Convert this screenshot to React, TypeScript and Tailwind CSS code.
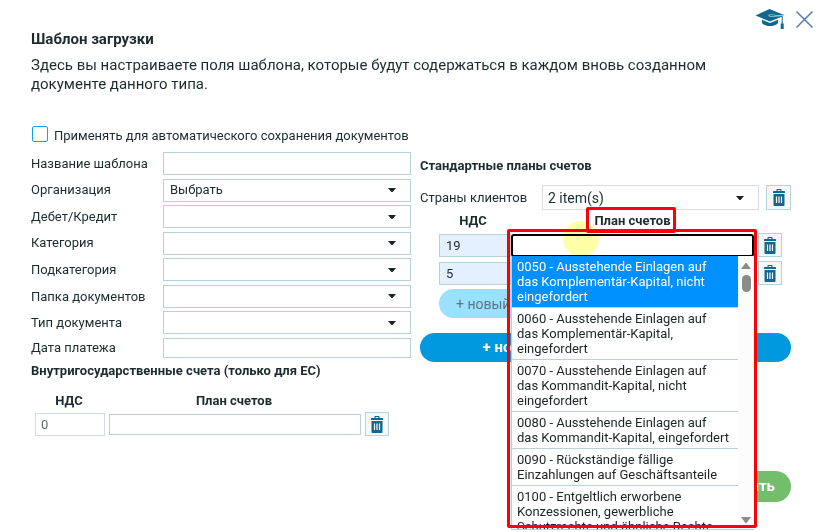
import type { ReactNode } from "react";

const accounts = [
  "0050 - Ausstehende Einlagen auf\ndas Komplementär-Kapital, nicht eingefordert",
  "0060 - Ausstehende Einlagen auf\ndas Komplementär-Kapital, eingefordert",
  "0070 - Ausstehende Einlagen auf\ndas Kommandit-Kapital, nicht eingefordert",
  "0080 - Ausstehende Einlagen auf\ndas Kommandit-Kapital, eingefordert",
  "0090 - Rückständige fällige\nEinzahlungen auf Geschäftsanteile",
  "0100 - Entgeltlich erworbene\nKonzessionen, gewerbliche\nSchutzrechte und ähnliche Rechte",
];

const fields = [
  { id: "name", label: "Название шаблона", kind: "text" },
  { id: "org", label: "Организация", kind: "select", value: "Выбрать" },
  { id: "debit", label: "Дебет/Кредит", kind: "select" },
  { id: "category", label: "Категория", kind: "select" },
  { id: "subcategory", label: "Подкатегория", kind: "select" },
  { id: "folder", label: "Папка документов", kind: "select" },
  { id: "type", label: "Тип документа", kind: "select" },
  { id: "date", label: "Дата платежа", kind: "date" },
];

function Caret() {
  return (
    <svg viewBox="0 0 8 4" className="pointer-events-none absolute right-[15px] top-1/2 h-1 w-2 -translate-y-1/2 fill-[#1c2426]">
      <path d="M0 0h8L4.600 4h-1.200z" />
    </svg>
  );
}

function TrashIcon() {
  return (
    <svg viewBox="0 0 12 17" className="h-[17px] w-3">
      <path fill="#11688c" fillRule="evenodd" d="M3.500 2V0.700Q3.500 0 4.200 0h3.600q.7 0 .7.700V2H11.300q.7 0 .7.700V4H0V2.700Q0 2 .7 2zM4.700 2h2.600v-.9H4.700z" />
      <path fill="#11688c" d="M.5 5h11v11q0 1-1 1h-9q-1 0-1-1z" />
      <path stroke="#fff" strokeWidth="1.200" d="M3.500 7.500v6.500M6 7.500v6.500M8.500 7.500v6.500" />
    </svg>
  );
}

function TrashButton({ large = false }: { large?: boolean }) {
  return (
    <button
      type="button"
      aria-label="Удалить"
      className={`${large ? "size-[25px]" : "size-6"} flex shrink-0 items-center justify-center border border-[#b9d2da] bg-[#f3f8f9]`}
    >
      <TrashIcon />
    </button>
  );
}

function HeadCell({ children }: { children?: ReactNode }) {
  return <th className="p-0 text-center font-bold leading-5 first:pr-1">{children}</th>;
}

function Columns() {
  return (
    <colgroup>
      <col className="w-[72px]" />
      <col />
      <col className="w-7" />
    </colgroup>
  );
}

const box = "border border-[#b9d2da] bg-white outline-none";

function AccountMenu() {
  return (
    <div className="absolute left-0 top-[22px] z-10 flex h-[274px] w-full overflow-hidden border-b border-l border-[#b9d2da] bg-white">
      <ul role="listbox" className="min-w-0 flex-1 whitespace-pre-line leading-[15px]">
        {accounts.map((name, i) => (
          <li
            key={name}
            role="option"
            aria-selected={i === 0}
            className={`border-b border-[#b9d2da] py-[3px] pl-[5px] ${i === 0 ? "bg-[#0090ff] text-white" : "text-[#1c2426]"}`}
          >
            {name}
          </li>
        ))}
      </ul>
      <div className="flex w-4 flex-col items-center bg-[#fcfcfc] pb-1.5 pt-[7px]">
        <svg viewBox="0 0 10 6" className="h-1.5 w-2.5 shrink-0 fill-[#8b8b8b]">
          <path d="M0 6L4.500 0h1L10 6z" />
        </svg>
        <div className="mt-1.5 h-[17px] w-[9px] rounded-full bg-[#8b8b8b]" />
        <svg viewBox="0 0 10 6" className="mt-auto h-1.5 w-2.5 shrink-0 fill-[#8b8b8b]">
          <path d="M0 0L4.500 6h1L10 0z" />
        </svg>
      </div>
    </div>
  );
}

export default function App() {
  return (
    <main className="h-screen overflow-hidden bg-white pl-[31px] font-[Roboto,'Liberation_Sans',sans-serif] text-[13px] text-[#1c2b2f]">
      <header className="flex justify-end gap-[10px] pr-[7px] pt-2">
        <button type="button" aria-label="Обучение">
          <svg viewBox="0 0 30 22" className="h-[22px] w-[30px]">
            <path fill="#11688c" d="M0.500 7.500L14.500 1L29 7l-.8.600L15.500 6.400q-2 0-2 1t2 1L26 8.900L15 13.500z" />
            <path fill="#11688c" d="M7 11.800l8 3.200 8-3.200v3.500q-3 2.800-8 2.800t-8-2.800z" />
            <path fill="none" stroke="#11688c" strokeWidth="1" d="M14.500 7.400L27.200 8.500V16" />
            <path fill="#11688c" d="M25.700 15.500h3v5.500h-3z" />
          </svg>
        </button>
        <button type="button" aria-label="Закрыть">
          <svg viewBox="0 0 19 19" className="size-[19px]">
            <path d="M1.500 1.500l16 16M17.500 1.500l-16 16" fill="none" stroke="#5f7fa8" strokeWidth="1.600" />
          </svg>
        </button>
      </header>

      <div className="pr-[30px]">
        <h1 className="text-[15px] font-bold leading-[18px]">Шаблон загрузки</h1>
        <p className="mt-2 max-w-[720px] text-[15px] leading-[19px]">
          Здесь вы настраиваете поля шаблона, которые будут содержаться в каждом вновь созданном документе данного типа.
        </p>

        <div className="mt-[31px] flex h-[17px] items-center gap-[6px]">
          <input id="auto" type="checkbox" className="ml-px size-4 appearance-none rounded-[2px] border border-[#0aa5f5]" />
          <label htmlFor="auto" className="mt-1">
            Применять для автоматического сохранения документов
          </label>
        </div>

        <div className="mt-[10px] grid grid-cols-[380fr_371fr] gap-[9px]">
          <form>
            <div className="flex h-[206px] flex-col justify-between">
              {fields.map((f) => (
                <div key={f.id} className="flex items-center">
                  <label htmlFor={f.id} className="w-[132px] shrink-0">
                    {f.label}
                  </label>
                  {f.kind === "select" ? (
                    <div className="relative flex-1">
                      <select id={f.id} className={`${box} block h-[23px] w-full appearance-none pl-[6px]`}>
                        <option>{f.value ?? ""}</option>
                      </select>
                      <Caret />
                    </div>
                  ) : (
                    <input id={f.id} className={`${box} min-w-0 flex-1 ${f.kind === "date" ? "h-5" : "h-[23px]"}`} />
                  )}
                </div>
              ))}
            </div>

            <h2 className="mt-[3px] font-bold leading-5">Внутригосударственные счета (только для ЕС)</h2>
            <div className="mt-[10px] pl-1 pr-[22px]">
              <table className="w-full table-fixed border-collapse">
                <Columns />
                <thead>
                  <tr>
                    <HeadCell>НДС</HeadCell>
                    <HeadCell>План счетов</HeadCell>
                    <HeadCell />
                  </tr>
                </thead>
                <tbody>
                  <tr className="h-[26px]">
                    <td className="p-0">
                      <input aria-label="НДС" defaultValue="0" className="block h-[23px] w-[70px] border border-[#cfdde6] bg-white pl-[5px] text-[#646b6d]" />
                    </td>
                    <td className="p-0 pl-[2px]">
                      <input aria-label="План счетов" className={`${box} block h-[21px] w-full`} />
                    </td>
                    <td className="p-0 pl-1">
                      <TrashButton />
                    </td>
                  </tr>
                </tbody>
              </table>
            </div>
          </form>

          <section>
            <h2 className="mt-1 font-bold leading-5">Стандартные планы счетов</h2>
            <div className="mt-[9px] flex items-center">
              <label htmlFor="countries" className="w-[122px] shrink-0">
                Страны клиентов
              </label>
              <div className="relative mr-[7px] flex-1">
                <select id="countries" className="block h-[25px] w-full appearance-none border border-[#d9dcdd] bg-white pl-[5px] text-sm">
                  <option>2 item(s)</option>
                </select>
                <Caret />
              </div>
              <TrashButton large />
            </div>

            <div className="pl-[19px] pr-[9px] pt-px">
              <table className="w-full table-fixed border-collapse">
                <Columns />
                <thead>
                  <tr>
                    <HeadCell>НДС</HeadCell>
                    <HeadCell>
                      <span className="relative">
                        План счетов
                        <span className="absolute -bottom-[5px] -left-2 -right-[5px] -top-[6px] rounded-[2px] border-[3px] border-[#fb0007]" />
                      </span>
                    </HeadCell>
                    <HeadCell />
                  </tr>
                </thead>
                <tbody>
                  <tr className="h-7">
                    <td className="p-0">
                      <input aria-label="НДС 1" defaultValue="19" className="block h-[23px] w-[72px] border border-[#b9d2da] bg-[#e4efff] pl-[6px]" />
                    </td>
                    <td className="p-0">
                      <div className="relative">
                        <input aria-label="План счетов 1" className="block h-[23px] w-full rounded-[3px] border-2 border-black bg-white outline-none" />
                        <AccountMenu />
                        <span className="pointer-events-none absolute -top-[13px] left-[52px] size-9 rounded-full bg-[#ffffa8] mix-blend-multiply" />
                        <span className="pointer-events-none absolute -left-1 -right-[3px] -top-[5px] z-20 h-[299px] rounded-[2px] border-[3px] border-[#fb0007]" />
                      </div>
                    </td>
                    <td className="p-0 pl-1">
                      <TrashButton />
                    </td>
                  </tr>
                  <tr className="h-7">
                    <td className="p-0">
                      <input aria-label="НДС 2" defaultValue="5" className="block h-[23px] w-[72px] border border-[#b9d2da] bg-[#e4efff] pl-[6px]" />
                    </td>
                    <td className="p-0">
                      <input aria-label="План счетов 2" className={`${box} block h-[23px] w-full`} />
                    </td>
                    <td className="p-0 pl-1">
                      <TrashButton />
                    </td>
                  </tr>
                </tbody>
              </table>
              <button type="button" className="mt-[2px] block h-[29px] rounded-full bg-[#99e1ff] px-[17px] text-sm text-[#5d7681]">
                + новый НДС
              </button>
            </div>

            <button type="button" className="mt-[15px] block h-[29px] w-full rounded-full bg-[#0099e0] text-[15px] font-bold text-white">
              + новый стандартный план счетов
            </button>
            <button type="button" className="ml-auto mt-[109px] block h-[31px] rounded-full bg-[#72be6c] px-4 text-[15px] font-bold text-white">
              сохранить
            </button>
          </section>
        </div>
      </div>
    </main>
  );
}
